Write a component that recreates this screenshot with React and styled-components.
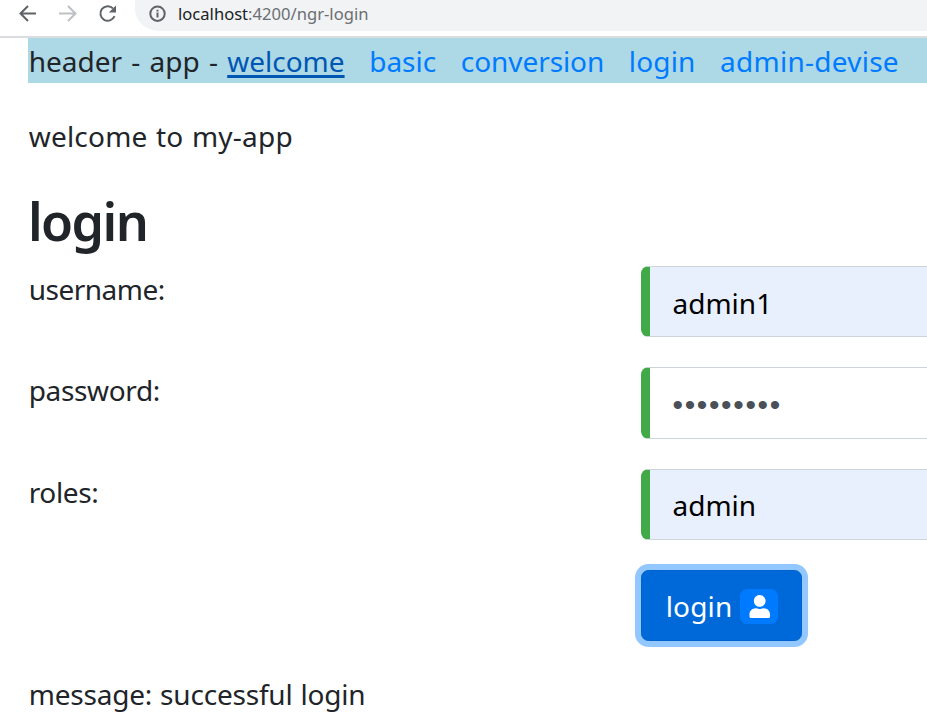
import React from 'react';
import styled, { createGlobalStyle } from 'styled-components';
import { FaUser } from 'react-icons/fa';

const GlobalStyle = createGlobalStyle`
  * { box-sizing: border-box; }
  html, body { margin: 0; overflow: hidden; background: #fff; }
  body {
    font-family: 'Noto Sans', sans-serif;
    font-size: 28px;
    line-height: 47px;
    color: #212529;
  }
`;

const Page = styled.div`
  width: 927px;
  height: 716px;
  overflow: hidden;
`;

const BrowserBar = styled.div`
  display: flex;
  height: 38px;
  padding-left: 18px;
  border-bottom: 2px solid #dadce0;
`;

const NavIcon = styled.svg`
  flex: none;
  width: 20px;
  height: 20px;
  margin: 4px 20px 0 0;
  fill: none;
  stroke: ${(p) => p.$color};
  stroke-width: 2;
`;

const AddressBar = styled.div`
  flex: 1;
  display: flex;
  height: 31px;
  margin-left: -3px;
  padding-left: 13px;
  border-radius: 0 0 0 24px / 0 0 0 22px;
  background: #f1f3f4;
`;

const InfoIcon = styled.svg`
  flex: none;
  width: 18px;
  height: 18px;
  margin: 5px 11px 0 1px;
`;

const Url = styled.span`
  font-size: 16.6px;
  line-height: 28px;
  color: #6b6e72;
  white-space: nowrap;
`;

const UrlHost = styled.span`
  color: #202124;
`;

const Content = styled.main`
  padding-left: 28px;
`;

const Header = styled.header`
  display: flex;
  gap: 24.6px;
  height: 45px;
  padding-left: 0.8px;
  background: lightblue;
  white-space: pre;
`;

const Brand = styled.span`
  word-spacing: 2px;
  letter-spacing: -0.02px;
  margin-right: -24.6px;
`;

const NavLink = styled.a`
  color: ${(p) => (p.$hovered ? '#0056b3' : '#007bff')};
  text-decoration: ${(p) => (p.$hovered ? 'underline' : 'none')};
  text-decoration-thickness: 3px;
  text-underline-offset: 3px;
  text-decoration-skip-ink: none;
  letter-spacing: ${(p) => p.$track || 0}px;
`;

const Paragraph = styled.p`
  height: 45px;
  margin: ${(p) => p.$top}px 0 0;
  padding-left: 0.7px;
  word-spacing: 0.9px;
  letter-spacing: ${(p) => p.$track}px;
`;

const Title = styled.h3`
  height: 63px;
  margin: 30px 0 15px;
  font-size: 52px;
  font-weight: 600;
  letter-spacing: -1.6px;
  line-height: 66px;
`;

const FormRow = styled.div`
  display: grid;
  grid-template-columns: 613px 1fr;
  height: 71.25px;
  margin-bottom: 30px;
`;

const Label = styled.label`
  padding-left: 0.7px;
  letter-spacing: ${(p) => p.$track}px;
`;

const Field = styled.input`
  width: 640px;
  height: 71.25px;
  padding: 2px 22.5px 0;
  border: 1px solid #ced4da;
  border-left: 9px solid #42a948;
  border-radius: 7.5px;
  outline: 0;
  font: inherit;
  color: ${(p) => (p.$autofilled ? '#000' : '#495057')};
  background: ${(p) => (p.$autofilled ? '#e8f0fe' : '#fff')};

  &[type='password'] {
    padding-top: 5px;
    font-family: 'Liberation Sans', sans-serif;
    font-size: 30px;
    letter-spacing: 1.65px;
  }
`;

const FieldClip = styled.div`
  overflow: hidden;
`;

const SubmitButton = styled.button`
  grid-column: 2;
  justify-self: start;
  display: flex;
  align-items: center;
  gap: 8px;
  width: 161px;
  height: 71.25px;
  padding: 2px 0 0 23.7px;
  border: 1px solid #0062cc;
  border-radius: 7.5px;
  box-shadow: 0 0 0 6px #93c7ff;
  font: inherit;
  letter-spacing: 0.15px;
  color: #fff;
  background: #0069d9;
`;

const Badge = styled.span`
  display: flex;
  align-items: center;
  justify-content: center;
  width: 38px;
  height: 35px;
  border-radius: 7.5px;
  background: #007bff;
  font-size: 23.5px;
`;

export default function App() {
  return (
    <Page>
      <GlobalStyle />
      <BrowserBar>
        <NavIcon viewBox="0 0 20 20" $color="#5f6368">
          <path d="M18 9.5H3M10 2L2.5 9.5L10 17" />
        </NavIcon>
        <NavIcon viewBox="0 0 20 20" $color="#bdc1c6">
          <path d="M1 9.5H17M10 2L17.5 9.5L10 17" />
        </NavIcon>
        <NavIcon viewBox="0 0 20 20" $color="#5f6368">
          <path d="M16.5 12.2A7.3 7.3 0 1 1 15 4.4" />
          <path d="M18 1.5V8.6H10.8Z" fill="#5f6368" stroke="none" />
        </NavIcon>
        <AddressBar>
          <InfoIcon viewBox="0 0 18 18">
            <circle cx="8.5" cy="8.7" r="7.2" fill="none" stroke="#5f6368" strokeWidth="2" />
            <path d="M8.5 7.6V12.6M8.5 4.7V6.5" stroke="#5f6368" strokeWidth="2" />
          </InfoIcon>
          <Url><UrlHost>localhost</UrlHost>:4200/ngr-login</Url>
        </AddressBar>
      </BrowserBar>
      <Content>
        <Header>
          <Brand>{'header - app - '}</Brand>
          <NavLink $hovered>welcome</NavLink>
          <NavLink>basic</NavLink>
          <NavLink $track={-0.07}>conversion</NavLink>
          <NavLink $track={0.15}>login</NavLink>
          <NavLink $track={0.25}>admin-devise</NavLink>
        </Header>
        <Paragraph $top={30} $track={0.22}>welcome to my-app</Paragraph>
        <Title>login</Title>
        <FormRow>
          <Label $track={-0.5}>username:</Label>
          <FieldClip><Field $autofilled defaultValue="admin1" /></FieldClip>
        </FormRow>
        <FormRow>
          <Label $track={-0.35}>password:</Label>
          <FieldClip><Field type="password" defaultValue="password1" /></FieldClip>
        </FormRow>
        <FormRow>
          <Label $track={-0.37}>roles:</Label>
          <FieldClip><Field $autofilled defaultValue="admin" /></FieldClip>
        </FormRow>
        <FormRow>
          <SubmitButton>
            login
            <Badge><FaUser /></Badge>
          </SubmitButton>
        </FormRow>
        <Paragraph $top={0} $track={-0.2}>message: successful login</Paragraph>
      </Content>
    </Page>
  );
}
